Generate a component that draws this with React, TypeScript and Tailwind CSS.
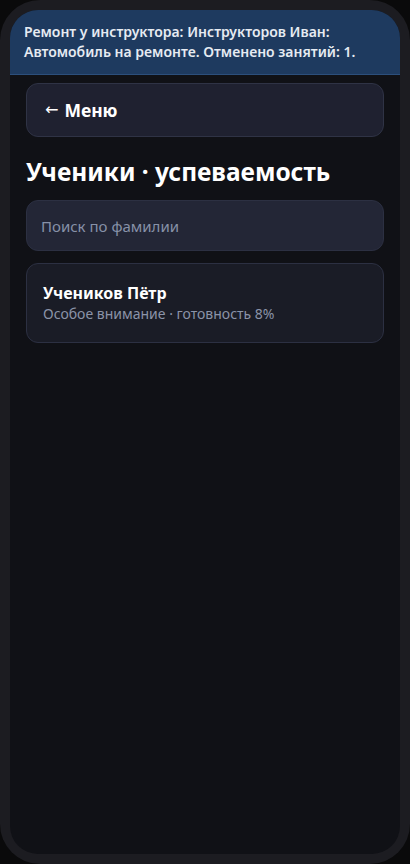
export default function App() {
  return (
    <div className="min-h-screen w-full bg-[#0a0a0b] font-['Noto_Sans',sans-serif]">
      <div className="h-[864px] w-[410px] rounded-[40px] bg-[#1c1c21] p-[10px]">
        <div className="flex h-full flex-col overflow-hidden rounded-[28px] bg-[#101116]">
          {/* banner */}
          <div className="border-b border-[#2c4f7c] bg-[#1e3a5f] px-[14px] pb-[12px] pt-[12px] text-[14px] font-semibold leading-[20px] text-[#e6ebf2]">
            Ремонт у инструктора: Инструкторов Иван: Автомобиль на ремонте. Отменено занятий: 1.
          </div>

          <div className="flex flex-col px-4 pt-2">
            <button className="flex h-[54px] items-center gap-[6px] rounded-[12px] border border-[#2f3345] bg-[#1f2130] px-[18px] text-left text-[17.5px] font-bold text-white">
              <span className="font-['DejaVu_Sans',sans-serif] text-[16px] font-normal">←</span>
              <span>Меню</span>
            </button>

            <h1 className="mt-[19px] text-[24.5px] font-bold leading-[32px] text-white">
              Ученики · успеваемость
            </h1>

            <input
              type="text"
              placeholder="Поиск по фамилии"
              className="mt-[12px] h-[51px] w-full rounded-[12px] border border-[#2c3042] bg-[#232636] px-[14px] text-[15px] text-white outline-none placeholder:text-[#8791a8]"
            />

            <div className="mt-[12px] flex flex-col rounded-[12px] border border-[#2c3042] bg-[#1a1c26] px-4 pb-[18px] pt-[18px]">
              <div className="text-[16px] font-bold leading-[22px] text-white">Учеников Пётр</div>
              <div className="text-[14px] leading-[20px] text-[#8b93a8]">Особое внимание · готовность 8%</div>
            </div>
          </div>
        </div>
      </div>
    </div>
  );
}
